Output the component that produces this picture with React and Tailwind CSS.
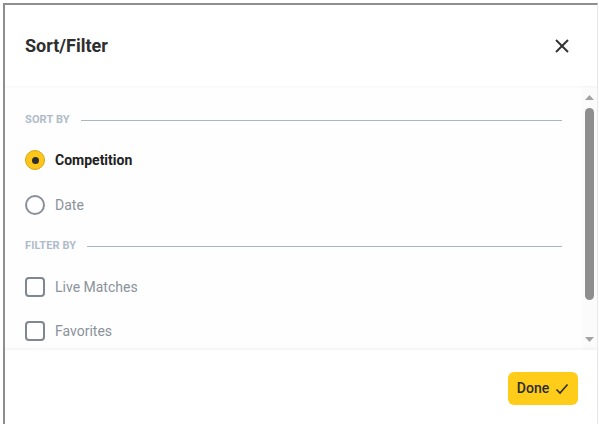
import { useState } from 'react'

const font = { fontFamily: 'Roboto, "Liberation Sans", sans-serif' }

function SectionLabel({ children, className = '' }) {
  return (
    <div className={`flex h-4 items-center ${className}`}>
      <span className="text-[11px] font-bold uppercase tracking-[0.01em] text-[#b0bbc8]">{children}</span>
      <div className="ml-[11px] h-px flex-1 bg-[#a9b7c5]" />
    </div>
  )
}

function Radio({ checked, label, onClick, className = '' }) {
  return (
    <button onClick={onClick} className={`flex h-5 items-center text-left ${className}`}>
      {checked ? (
        <span className="flex h-5 w-5 items-center justify-center rounded-full border border-[#d9a60c] bg-[#fcc61a]">
          <span className="h-[7px] w-[7px] rounded-full bg-[#2d2d2d]" />
        </span>
      ) : (
        <span className="h-5 w-5 rounded-full border-2 border-[#899099]" />
      )}
      <span className={`ml-[10px] text-[14px] ${checked ? 'font-bold text-[#222]' : 'text-[#8b929b]'}`}>{label}</span>
    </button>
  )
}

function Checkbox({ checked, label, onClick, className = '' }) {
  return (
    <button onClick={onClick} className={`flex h-5 items-center text-left ${className}`}>
      <span className={`flex h-5 w-5 items-center justify-center rounded-[4px] border-2 ${checked ? 'border-[#d9a60c] bg-[#fcc61a]' : 'border-[#7f8790]'}`}>
        {checked && (
          <svg width="12" height="12" viewBox="0 0 12 12" fill="none" stroke="#2d2d2d" strokeWidth="2">
            <polyline points="2 6 5 9 10 3" />
          </svg>
        )}
      </span>
      <span className="ml-[10px] text-[14px] text-[#8b929b]">{label}</span>
    </button>
  )
}

// drawn stand-in for the native scrollbar of the body
function ScrollBar() {
  return (
    <div className="flex w-[15px] shrink-0 flex-col items-center bg-[#fbfbfb]">
      <svg className="mt-[9px]" width="9" height="5" viewBox="0 0 9 5" fill="#a3a3a3">
        <polygon points="0 5 4.5 0 9 5" />
      </svg>
      <div className="mt-[8px] h-[192px] w-[9px] rounded-full bg-[#8e8e8e]" />
      <div className="flex-1" />
      <svg className="mb-[8px]" width="9" height="5" viewBox="0 0 9 5" fill="#a3a3a3">
        <polygon points="0 0 9 0 4.5 5" />
      </svg>
    </div>
  )
}

export default function App() {
  const [sort, setSort] = useState('competition')
  const [live, setLive] = useState(false)
  const [fav, setFav] = useState(false)

  return (
    <div className="h-[424px] overflow-hidden bg-white pl-[3px] pt-[3px]" style={font}>
      <div className="flex h-[421px] w-[595px] flex-col border-l-2 border-t-2 border-r border-l-[#8f8f8f] border-t-[#8f8f8f] border-r-[#e8e8e8] bg-white">

        {/* Header */}
        <div className="relative z-10 flex h-[81px] shrink-0 items-center justify-between pl-5 pr-[28px] shadow-[0_1px_2px_rgba(0,0,0,0.04)]">
          <h1 className="text-[18px] font-bold text-[#2e2e2e]">Sort/Filter</h1>
          <button className="flex h-[14px] w-[14px] items-center justify-center">
            <svg width="14" height="14" viewBox="0 0 14 14" fill="none" stroke="#333" strokeWidth="2">
              <line x1="1" y1="1" x2="13" y2="13" />
              <line x1="13" y1="1" x2="1" y2="13" />
            </svg>
          </button>
        </div>

        {/* Body */}
        <div className="flex h-[264px] shrink-0 bg-[#fefefe]">
          <div className="flex-1 overflow-hidden">
            <div className="pb-16 pl-5 pr-5 pt-[26px]">
              <SectionLabel>Sort by</SectionLabel>
              <Radio className="mt-[22px]" checked={sort === 'competition'} label="Competition" onClick={() => setSort('competition')} />
              <Radio className="mt-[25px]" checked={sort === 'date'} label="Date" onClick={() => setSort('date')} />

              <SectionLabel className="mt-[23px]">Filter by</SectionLabel>
              <Checkbox className="mt-[23px]" checked={live} label="Live Matches" onClick={() => setLive(v => !v)} />
              <Checkbox className="mt-6" checked={fav} label="Favorites" onClick={() => setFav(v => !v)} />
            </div>
          </div>
          <ScrollBar />
        </div>

        {/* Footer */}
        <div className="relative flex flex-1 justify-end pr-[19px] pt-[22px] shadow-[0_-2px_3px_rgba(0,0,0,0.04)]">
          <button className="flex h-[33px] w-[70px] items-center justify-center gap-[6px] rounded-[6px] bg-[#fecc19] text-[14px] font-medium text-[#2b2b2b]">
            Done
            <svg width="14" height="12" viewBox="0 0 14 12" fill="none" stroke="#2b2b2b" strokeWidth="1.6">
              <polyline points="1.5 6.5 5 10 12.5 1.5" />
            </svg>
          </button>
        </div>
      </div>
    </div>
  )
}
